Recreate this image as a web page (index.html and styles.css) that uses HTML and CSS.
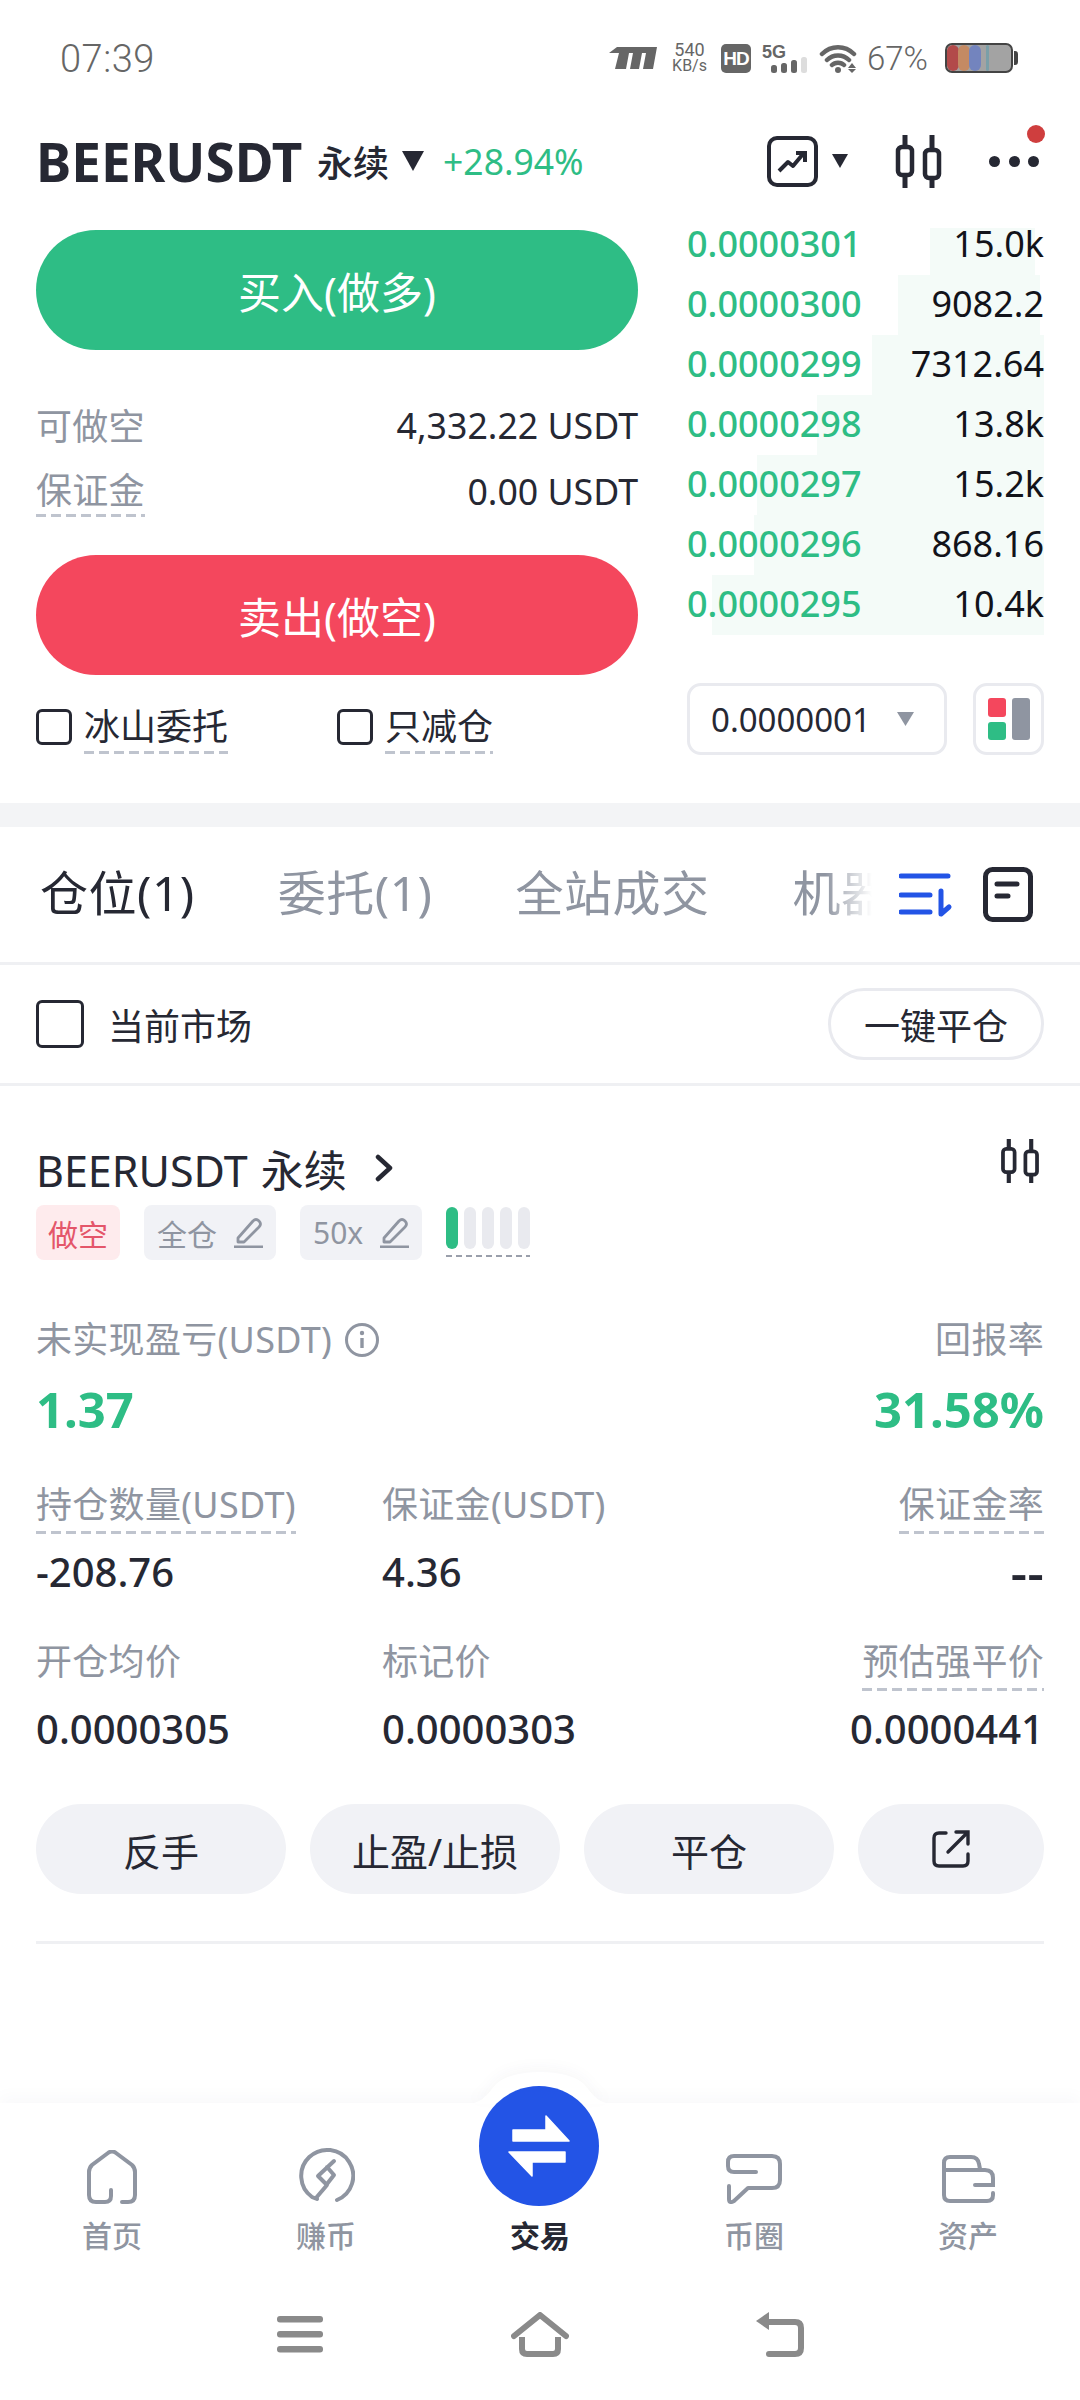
FILE: index.html
```html
<!DOCTYPE html>
<html>
<head>
<meta charset="utf-8"/>
<title>BEERUSDT</title>
<link rel="stylesheet" href="styles.css">
</head>
<body>

<div class="status">
  <span class="time">07:39</span>
  <div class="status-icons">
    <svg class="st-logo" width="48" height="22" viewBox="0 0 48 22"><path d="M8 0H48L44 22H34L37 6H33L30 22H21L24 6H20L17 22H6L10 6H0Z" fill="#666"/></svg>
    <div class="speed"><span>540</span><span class="speed-unit">KB/s</span></div>
    <span class="hd">HD</span>
    <div class="net">
      <span class="net-5g">5G</span>
      <svg width="36" height="16" viewBox="0 0 36 16"><rect x="0" y="8" width="6" height="8" rx="2.5" fill="#666"/><rect x="10" y="6" width="6" height="10" rx="2.5" fill="#666"/><rect x="20" y="3" width="6" height="13" rx="2.5" fill="#666"/><rect x="30" y="0" width="6" height="16" rx="2.5" fill="#ddd"/></svg>
    </div>
    <svg class="st-wifi" width="38" height="29" viewBox="0 0 38 29"><path d="M3 10C12 1 26 1 35 10M8 16C14 10 24 10 30 16M13 21C16 18 22 18 25 21" fill="none" stroke="#666" stroke-width="4.5" stroke-linecap="round"/><circle cx="19" cy="26" r="3" fill="#666"/><path d="M33 19l4 5h-8zM33 29l4-4h-8z" fill="#666"/></svg>
    <span class="pct">67%</span>
    <div class="battery">
      <div class="cell">
        <i class="c1"></i><i class="c2"></i><i class="c3"></i><i class="c4"></i>
      </div>
      <span class="nub"></span>
    </div>
  </div>
</div>

<div class="head">
  <span class="sym">BEERUSDT</span>
  <span class="perp">永续</span>
  <svg class="caret" width="24" height="20" viewBox="0 0 24 20"><path d="M1 0H23L12 20Z" fill="#262833"/></svg>
  <span class="chg">+28.94%</span>
  <div class="head-tools">
    <svg width="51" height="51" viewBox="0 0 51 51"><rect x="2" y="2" width="47" height="47" rx="8" fill="none" stroke="#262833" stroke-width="4"/><path d="M12 35L21 26L26 30L36 18" fill="none" stroke="#262833" stroke-width="4" stroke-linejoin="round"/><path d="M29 17H38V26" fill="none" stroke="#262833" stroke-width="4"/></svg>
    <svg class="tool-caret" width="16" height="14" viewBox="0 0 16 14"><path d="M0 0H16L8 14Z" fill="#262833"/></svg>
    <svg class="tool-candle" width="47" height="53" viewBox="0 0 47 53"><path d="M10 0V12M10 40V53M37 0V15M37 43V53" stroke="#262833" stroke-width="5"/><rect x="3" y="12" width="14" height="28" rx="4" fill="none" stroke="#262833" stroke-width="4.5"/><rect x="30" y="15" width="14" height="28" rx="4" fill="none" stroke="#262833" stroke-width="4.5"/></svg>
    <div class="more"><i></i><i></i><i></i><span class="more-dot"></span></div>
  </div>
</div>

<div class="trade">
  <div class="form">
    <div class="btn-big buy">买入(做多)</div>
    <div class="info-row first"><span class="muted">可做空</span><span class="amt">4,332.22 USDT</span></div>
    <div class="info-row"><span class="muted dash">保证金</span><span class="amt">0.00 USDT</span></div>
    <div class="btn-big sell">卖出(做空)</div>
    <div class="opts">
      <label class="opt"><span class="box"></span><span class="dash">冰山委托</span></label>
      <label class="opt"><span class="box"></span><span class="dash">只减仓</span></label>
    </div>
  </div>

  <div class="book">
    <div class="ob-row first"><span class="ob-bar" style="left:243px;right:9px"></span><span class="price">0.0000301</span><span class="qty">15.0k</span></div>
    <div class="ob-row"><span class="ob-bar" style="left:211px;right:4px"></span><span class="price">0.0000300</span><span class="qty">9082.2</span></div>
    <div class="ob-row"><span class="ob-bar" style="left:185px;right:0"></span><span class="price">0.0000299</span><span class="qty">7312.64</span></div>
    <div class="ob-row"><span class="ob-bar" style="left:130px;right:0"></span><span class="price">0.0000298</span><span class="qty">13.8k</span></div>
    <div class="ob-row"><span class="ob-bar" style="left:70px;right:0"></span><span class="price">0.0000297</span><span class="qty">15.2k</span></div>
    <div class="ob-row"><span class="ob-bar" style="left:67px;right:0"></span><span class="price">0.0000296</span><span class="qty">868.16</span></div>
    <div class="ob-row"><span class="ob-bar" style="left:25px;right:0"></span><span class="price">0.0000295</span><span class="qty">10.4k</span></div>
    <div class="book-foot">
      <div class="tick"><span>0.0000001</span><svg width="17" height="14" viewBox="0 0 17 14"><path d="M0 0H17L8.5 14Z" fill="#8f95a1"/></svg></div>
      <div class="layout-btn">
        <svg width="42" height="42" viewBox="0 0 42 42"><rect width="18" height="19" rx="3" fill="#f4475d"/><rect y="24" width="18" height="18" rx="3" fill="#2ebd85"/><rect x="24" width="18" height="42" rx="3" fill="#8f95a1"/></svg>
      </div>
    </div>
  </div>
</div>

<div class="band"></div>

<div class="tabs">
  <div class="tab-strip">
    <span class="tab on">仓位(1)</span>
    <span class="tab">委托(1)</span>
    <span class="tab">全站成交</span>
    <span class="tab">机器</span>
  </div>
  <svg class="tab-sort" width="54" height="44" viewBox="0 0 54 44"><path d="M2 3H49M2 22H31M2 39H31" stroke="#2354e6" stroke-width="5" stroke-linecap="round"/><path d="M42 18V41L50 34" fill="none" stroke="#2354e6" stroke-width="5" stroke-linecap="round" stroke-linejoin="round"/></svg>
  <svg class="tab-doc" width="50" height="55" viewBox="0 0 50 55"><rect x="2.5" y="2.5" width="45" height="50" rx="7" fill="none" stroke="#262833" stroke-width="5"/><path d="M14 17H34M14 29H25" stroke="#262833" stroke-width="5" stroke-linecap="round"/></svg>
</div>

<div class="filter">
  <label class="filter-check"><span class="box big"></span>当前市场</label>
  <span class="close-all">一键平仓</span>
</div>

<div class="pos">
  <div class="pos-title">
    <span class="pos-name">BEERUSDT 永续</span>
    <svg class="pos-chev" width="18" height="28" viewBox="0 0 18 28"><path d="M3 3L15 14L3 25" fill="none" stroke="#262833" stroke-width="4.5" stroke-linecap="round" stroke-linejoin="round"/></svg>
    <svg class="pos-candle" width="40" height="44" viewBox="0 0 47 53"><path d="M10 0V12M10 40V53M37 0V15M37 43V53" stroke="#262833" stroke-width="5"/><rect x="3" y="12" width="14" height="28" rx="4" fill="none" stroke="#262833" stroke-width="4.5"/><rect x="30" y="15" width="14" height="28" rx="4" fill="none" stroke="#262833" stroke-width="4.5"/></svg>
  </div>
  <div class="tags">
    <span class="tag short">做空</span>
    <span class="tag">全仓<svg class="pen" width="30" height="30" viewBox="0 0 30 30"><path d="M5 20L20 3Q23 0 26 3T26 9L11 24H5Z" fill="none" stroke="#8f95a1" stroke-width="2.8" stroke-linejoin="round"/><path d="M1 29H30" stroke="#8f95a1" stroke-width="3"/></svg></span>
    <span class="tag">50x<svg class="pen" width="30" height="30" viewBox="0 0 30 30"><path d="M5 20L20 3Q23 0 26 3T26 9L11 24H5Z" fill="none" stroke="#8f95a1" stroke-width="2.8" stroke-linejoin="round"/><path d="M1 29H30" stroke="#8f95a1" stroke-width="3"/></svg></span>
    <div class="risk"><i class="on"></i><i></i><i></i><i></i><i></i></div>
  </div>

  <div class="pnl-labels">
    <span class="muted pnl-lab">未实现盈亏(USDT)<svg width="36" height="36" viewBox="0 0 36 36"><circle cx="18" cy="18" r="15.5" fill="none" stroke="#8f95a1" stroke-width="3"/><circle cx="18" cy="11" r="2.2" fill="#8f95a1"/><path d="M18 16V26" stroke="#8f95a1" stroke-width="3.4"/></svg></span>
    <span class="muted">回报率</span>
  </div>
  <div class="pnl-vals"><span>1.37</span><span>31.58%</span></div>

  <div class="stats">
    <div class="cell-l"><span class="muted dash">持仓数量(USDT)</span></div>
    <div class="cell-l"><span class="muted">保证金(USDT)</span></div>
    <div class="cell-r"><span class="muted dash">保证金率</span></div>
    <div class="val">-208.76</div>
    <div class="val">4.36</div>
    <div class="val cell-r"><span class="nil">--</span></div>
    <div class="cell-l row2"><span class="muted">开仓均价</span></div>
    <div class="cell-l row2"><span class="muted">标记价</span></div>
    <div class="cell-r row2"><span class="muted dash">预估强平价</span></div>
    <div class="val">0.0000305</div>
    <div class="val">0.0000303</div>
    <div class="val cell-r">0.0000441</div>
  </div>

  <div class="actions">
    <span class="act">反手</span>
    <span class="act">止盈/止损</span>
    <span class="act">平仓</span>
    <span class="act act-icon"><svg width="38" height="38" viewBox="0 0 38 38"><path d="M14 3H7Q2 3 2 8V31Q2 36 7 36H31Q36 36 36 31V24" fill="none" stroke="#262833" stroke-width="3.4" stroke-linecap="round"/><path d="M16 22L35 3M24 2H36V14" fill="none" stroke="#262833" stroke-width="3.4" stroke-linecap="round"/></svg></span>
  </div>
  <div class="pos-end"></div>
</div>

<div class="bottom">
  <svg class="bump" width="240" height="32" viewBox="0 0 240 32"><path d="M0 32H45C62 32 66 24 76 12C92 -4 148 -4 164 12C174 24 178 32 195 32H240Z" fill="#fff"/></svg>
  <div class="nav">
    <div class="nav-item">
      <svg width="52" height="54" viewBox="0 0 52 54"><path d="M25 40V46Q25 52 19 52H10Q3 52 3 45V22Q3 18 6 15L22 3Q26 0 30 3L46 15Q49 18 49 22V45Q49 52 42 52H36" fill="none" stroke="#8f95a1" stroke-width="4" stroke-linecap="round"/></svg>
      <span>首页</span>
    </div>
    <div class="nav-item">
      <svg width="57" height="57" viewBox="0 0 57 57"><path d="M39 53A26 26 0 1 0 14 50L19 52" fill="none" stroke="#8f95a1" stroke-width="4" stroke-linecap="round"/><path d="M36 14L20 29L29 38L18 51M29 20L36 28L29 37" fill="none" stroke="#8f95a1" stroke-width="4" stroke-linecap="round" stroke-linejoin="round"/></svg>
      <span>赚币</span>
    </div>
    <div class="nav-item on">
      <div class="fab">
        <svg width="120" height="120" viewBox="0 0 120 120"><path d="M34 44H67V30L90 55H34ZM30 66H86V76H53V90Z" fill="#fff" stroke="#fff" stroke-width="1.5" stroke-linejoin="round"/></svg>
      </div>
      <span>交易</span>
    </div>
    <div class="nav-item">
      <svg width="56" height="50" viewBox="0 0 56 50"><path d="M30 18H8Q2 18 2 12V8Q2 2 8 2H46Q54 2 54 10V26Q54 34 46 34H22L8 47Q3 50 3 45V32" fill="none" stroke="#8f95a1" stroke-width="4" stroke-linecap="round" stroke-linejoin="round"/></svg>
      <span>币圈</span>
    </div>
    <div class="nav-item">
      <svg width="54" height="50" viewBox="0 0 54 50"><path d="M3 16H44Q52 16 52 24V31H34M52 39V41Q52 47 46 47H9Q3 47 3 41V9Q3 3 9 3H30Q37 3 38 10L39 15" fill="none" stroke="#8f95a1" stroke-width="4" stroke-linecap="round"/></svg>
      <span>资产</span>
    </div>
  </div>
  <div class="sysnav">
    <svg width="46" height="37" viewBox="0 0 46 37"><rect width="46" height="6.5" rx="3" fill="#8a8a8a"/><rect y="15" width="46" height="6.5" rx="3" fill="#8a8a8a"/><rect y="30" width="46" height="6.5" rx="3" fill="#8a8a8a"/></svg>
    <svg width="58" height="45" viewBox="0 0 58 45"><path d="M3 24L29 3L55 24" fill="none" stroke="#8a8a8a" stroke-width="6" stroke-linecap="round" stroke-linejoin="round"/><path d="M11 25V37Q11 42 16 42H42Q47 42 47 37V25" fill="none" stroke="#8a8a8a" stroke-width="6"/></svg>
    <svg width="48" height="45" viewBox="0 0 48 45"><path d="M0 9L13 0V18Z" fill="#8a8a8a"/><path d="M8 10H39Q45 10 45 16V36Q45 42 39 42H13" fill="none" stroke="#8a8a8a" stroke-width="6" stroke-linecap="round"/></svg>
  </div>
</div>

</body>
</html>
```

FILE: styles.css
```css
* {
  box-sizing: border-box;
}

body {
  margin: 0;
  width: 1080px;
  height: 2400px;
  display: flex;
  flex-direction: column;
  background: #fff;
  color: #262833;
  font-family: "Noto Sans", "Noto Sans CJK SC", sans-serif;
  font-size: 36px;
  overflow: hidden;
}

.muted {
  display: inline-block;
  color: #8f95a1;
  line-height: 46px;
  letter-spacing: 0.3px;
}

.dash {
  display: inline-block;
  line-height: 46px;
  padding-bottom: 3px;
  background-image: linear-gradient(to right, #bfc4ce 10px, transparent 10px);
  background-size: 15px 3px;
  background-repeat: repeat-x;
  background-position: left bottom;
}

/* status bar */
.status {
  height: 116px;
  flex: none;
  display: flex;
  align-items: center;
  justify-content: space-between;
  padding: 0 62px 0 60px;
  color: #666;
}

.time {
  padding-top: 2px;
  font-family: Roboto, sans-serif;
  font-size: 38px;
  font-weight: 300;
  letter-spacing: 0.5px;
}

.status-icons {
  display: flex;
  align-items: center;
}

.speed {
  display: flex;
  flex-direction: column;
  align-items: center;
  margin-left: 15px;
  font-family: Roboto, sans-serif;
  font-size: 18px;
  line-height: 16px;
}

.speed-unit {
  font-size: 16px;
}

.hd {
  margin-left: 14px;
  width: 30px;
  height: 29px;
  border-radius: 5px;
  background: #666;
  color: #fff;
  font-family: "Liberation Sans", sans-serif;
  font-size: 19px;
  font-weight: 700;
  letter-spacing: -1px;
  line-height: 29px;
  text-align: center;
}

.net {
  margin-left: 11px;
  width: 45px;
  height: 29px;
  position: relative;
}

.net-5g {
  position: absolute;
  left: 0;
  top: 0;
  font-family: "Liberation Sans", sans-serif;
  font-size: 18px;
  line-height: 16px;
  font-weight: 700;
}

.net svg {
  position: absolute;
  left: 9px;
  bottom: 0;
}

.st-wifi {
  margin-left: 12px;
}

.pct {
  margin-left: 10px;
  font-family: Roboto, sans-serif;
  font-size: 33px;
  font-weight: 300;
}

.battery {
  margin-left: 17px;
  display: flex;
  align-items: center;
}

.cell {
  width: 68px;
  height: 30px;
  border: 2.5px solid #444;
  border-radius: 7px;
  background: #a3a3a3;
  display: flex;
  overflow: hidden;
}

.cell i {
  width: 12px;
  display: block;
  border-radius: 6px;
  margin-right: -1px;
}

.c1 { background: #b24a4a; }
.c2 { background: #c48a63; }
.c3 { background: #7384be; }
.c4 { background: #7a9fa8; width: 3px !important; margin-left: 6px; }

.nub {
  width: 4px;
  height: 14px;
  margin-left: 1px;
  background: #444;
  border-radius: 0 3px 3px 0;
}

/* header */
.head {
  height: 90px;
  flex: none;
  margin-bottom: 9px;
  padding: 0 36px;
  display: flex;
  align-items: center;
}

.sym {
  font-size: 53px;
  font-weight: 700;
  width: 281px;
  white-space: nowrap;
}

.perp {
  font-size: 36px;
  font-weight: 500;
}

.caret {
  margin-left: 12px;
}

.chg {
  margin-left: 18px;
  font-size: 35.5px;
  color: #2ebd85;
}

.head-tools {
  margin-left: auto;
  padding-right: 5px;
  display: flex;
  align-items: center;
}

.tool-caret {
  margin-left: 14px;
}

.tool-candle {
  margin-left: 47px;
}

.more {
  margin-left: 47px;
  width: 50px;
  display: flex;
  justify-content: space-between;
  position: relative;
}

.more i {
  width: 11px;
  height: 11px;
  border-radius: 50%;
  background: #262833;
}

.more-dot {
  position: absolute;
  right: -6px;
  top: -31px;
  width: 18px;
  height: 18px;
  border-radius: 50%;
  background: #cf3e3e;
}

/* trade form + book */
.trade {
  flex: none;
  display: grid;
  grid-template-columns: 602px 357px;
  column-gap: 49px;
  padding: 0 36px 48px;
}

.form {
  padding-top: 15px;
}

.btn-big {
  height: 120px;
  border-radius: 60px;
  display: flex;
  align-items: center;
  justify-content: center;
  color: #fff;
  font-size: 43px;
}

.buy {
  background: #2ebd85;
}

.sell {
  background: #f4475d;
  margin-top: 31px;
}

.info-row {
  height: 66px;
  display: flex;
  align-items: center;
  justify-content: space-between;
}

.info-row.first {
  margin-top: 42px;
}

.info-row .muted {
  margin-top: 3px;
}

.amt {
  font-size: 35.7px;
}

.opts {
  margin-top: 26px;
  display: flex;
}

.opt {
  display: flex;
  align-items: flex-start;
  gap: 12px;
  width: 301px;
}

.opt .box {
  margin-top: 8px;
}

.opt .dash {
  margin-top: 3px;
  padding-bottom: 4px;
}

.box {
  width: 36px;
  height: 36px;
  flex: none;
  border: 3px solid #262833;
  border-radius: 6px;
}

.box.big {
  width: 48px;
  height: 48px;
}

.ob-row {
  height: 60px;
  padding-bottom: 3px;
  display: flex;
  align-items: center;
  justify-content: space-between;
  position: relative;
}

.ob-bar {
  position: absolute;
  top: 0;
  bottom: 0;
  background: #f4fbf8;
}

.ob-row.first .ob-bar {
  top: 13px;
}

.price,
.qty {
  position: relative;
}

.price {
  color: #2ebd85;
  font-weight: 500;
}

.qty {
  color: #12131a;
}

.book-foot {
  margin-top: 48px;
  display: flex;
  justify-content: space-between;
}

.tick {
  width: 260px;
  height: 72px;
  border: 3px solid #e9eaef;
  border-radius: 14px;
  display: flex;
  align-items: center;
  justify-content: space-between;
  padding: 0 30px 0 21px;
  font-size: 33px;
}

.layout-btn {
  width: 71px;
  height: 72px;
  border: 3px solid #e9eaef;
  border-radius: 14px;
  display: flex;
  align-items: center;
  justify-content: center;
}

.band {
  height: 24px;
  flex: none;
  background: #f3f4f6;
}

/* tabs */
.tabs {
  height: 138px;
  flex: none;
  border-bottom: 3px solid #eff0f3;
  display: flex;
  align-items: center;
  padding-left: 36px;
}

.tab-strip {
  width: 836px;
  margin-bottom: 10px;
  padding-left: 4px;
  display: flex;
  gap: 83px;
  overflow: hidden;
  white-space: nowrap;
  font-size: 48px;
  letter-spacing: 0.5px;
  color: #8f95a1;
  -webkit-mask-image: linear-gradient(to right, #000 94.4%, transparent 100%);
  mask-image: linear-gradient(to right, #000 94.4%, transparent 100%);
}

.tab.on {
  color: #262833;
}

.tab-sort {
  margin-left: 27px;
}

.tab-doc {
  margin-left: 30px;
}

.filter {
  height: 121px;
  flex: none;
  border-bottom: 3px solid #eff0f3;
  display: flex;
  align-items: center;
  justify-content: space-between;
  padding: 0 36px;
}

.filter-check {
  display: flex;
  align-items: center;
  gap: 24px;
}

.close-all {
  width: 216px;
  height: 72px;
  border: 3px solid #e9eaef;
  border-radius: 36px;
  display: flex;
  align-items: center;
  justify-content: center;
}

/* position card */
.pos {
  flex: none;
  padding: 56px 36px 0;
}

.pos-title {
  height: 56px;
  margin-top: -2px;
  margin-bottom: 2px;
  display: flex;
  align-items: center;
  position: relative;
}

.pos-name {
  font-size: 43px;
  word-spacing: 2px;
  white-space: nowrap;
}

.pos-chev {
  margin-left: 28px;
}

.pos-candle {
  position: absolute;
  right: 4px;
  top: -1px;
}

.tags {
  margin-top: 9px;
  display: flex;
  align-items: center;
  gap: 24px;
}

.tag {
  height: 55px;
  padding: 0 13px;
  border-radius: 8px;
  background: #f1f2f6;
  color: #8f95a1;
  font-size: 30px;
  display: flex;
  align-items: center;
  gap: 16px;
}

.tag.short {
  padding: 0 12px;
  background: #feebed;
  color: #e4566a;
}

.risk {
  display: flex;
  gap: 6px;
  padding-bottom: 8px;
  margin-top: -1px;
  background-image: linear-gradient(to right, #9a9fab 6px, transparent 6px);
  background-size: 10px 2px;
  background-repeat: repeat-x;
  background-position: left bottom;
}

.risk i {
  width: 12px;
  height: 42px;
  border-radius: 6px;
  background: #e9eaef;
}

.risk i.on {
  background: #2ebd85;
}

.pnl-labels {
  margin-top: 56px;
  height: 48px;
  display: flex;
  align-items: center;
  justify-content: space-between;
}

.pnl-lab {
  display: flex;
  align-items: center;
  gap: 12px;
}

.pnl-vals {
  margin-top: 15px;
  height: 60px;
  display: flex;
  align-items: center;
  justify-content: space-between;
  color: #2ebd85;
  font-size: 49px;
  font-weight: 700;
}

.stats {
  margin-top: 41px;
  display: grid;
  grid-template-columns: 346px 1fr 1fr;
}

.cell-l,
.cell-r {
  height: 50px;
}

.cell-l .dash,
.cell-r .dash {
  padding-bottom: 6px;
}

.cell-r {
  text-align: right;
}

.val {
  margin-top: 18px;
  height: 48px;
  line-height: 48px;
  font-size: 40px;
  font-weight: 500;
}

.nil {
  font-size: 52px;
  line-height: 48px;
}

.row2 {
  margin-top: 41px;
}

.actions {
  margin-top: 51px;
  display: grid;
  grid-template-columns: 250px 250px 250px 1fr;
  column-gap: 24px;
}

.act {
  height: 90px;
  border-radius: 45px;
  background: #f1f2f6;
  display: flex;
  align-items: center;
  justify-content: center;
  font-size: 38px;
}

.pos-end {
  margin-top: 47px;
  height: 3px;
  background: #eff0f3;
}

/* bottom nav */
.bottom {
  margin-top: auto;
  height: 297px;
  flex: none;
  position: relative;
  background: #fff;
  box-shadow: 0 -8px 14px rgba(30, 40, 70, 0.025);
}

.bump {
  position: absolute;
  left: 420px;
  top: -31px;
  filter: drop-shadow(0 -5px 6px rgba(30, 40, 70, 0.03));
}

.nav {
  position: relative;
  display: grid;
  grid-template-columns: repeat(5, 214px);
  padding: 44px 5px 0;
}

.nav-item {
  height: 109px;
  display: flex;
  flex-direction: column;
  align-items: center;
  justify-content: flex-end;
  position: relative;
  color: #8f95a1;
  font-size: 30px;
  font-weight: 500;
  line-height: 40px;
}

.nav-item svg {
  position: absolute;
  bottom: 52px;
}

.nav-item.on {
  color: #262833;
  font-weight: 700;
}

.fab {
  position: absolute;
  left: 46px;
  top: -61px;
  width: 120px;
  height: 120px;
  border-radius: 50%;
  background: #2354e6;
}

.fab svg {
  position: static;
}

.sysnav {
  margin-top: 56px;
  padding: 0 180px;
  display: grid;
  grid-template-columns: repeat(3, 240px);
  justify-items: center;
  align-items: center;
}
```
